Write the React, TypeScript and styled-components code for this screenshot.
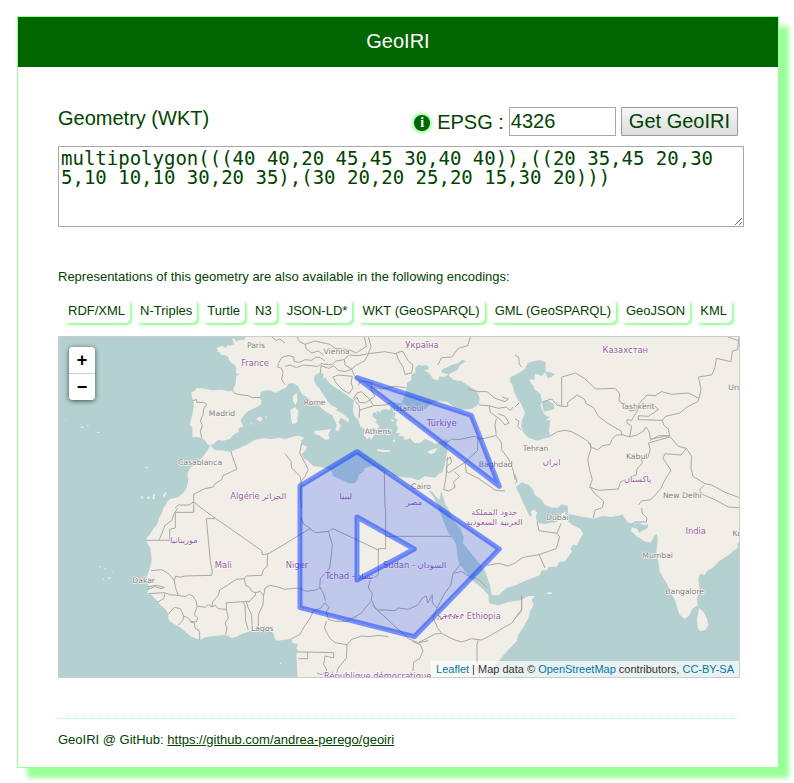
import React from 'react';
import styled, { createGlobalStyle } from 'styled-components';

const GlobalStyle = createGlobalStyle`
  body {
    display: flow-root;
    margin: 0;
    background: #fff;
    color: #040;
    font-family: "Liberation Sans", Arial, sans-serif;
    font-size: 13px;
    line-height: 16px;
  }
`;

const Card = styled.div`
  margin: 16px 15px 15px 17px;
  border: 1px solid #9f9;
  background: #fff;
  box-shadow: 10px 10px 5px #9f9;
`;

const Header = styled.header`
  padding-bottom: 2px;
  background: #060;
  color: #fff;
  text-align: center;
`;

const Title = styled.h1`
  margin: 0;
  font-size: 20px;
  font-weight: normal;
  line-height: 48px;
`;

const Content = styled.main`
  padding: 40px 40px 0;
`;

const Toolbar = styled.div`
  display: flex;
  justify-content: space-between;
  align-items: flex-start;
  font-size: 20px;
  line-height: 22px;
`;

const Controls = styled.div`
  display: flex;
  align-items: center;
  gap: 5px;
`;

const InfoLink = styled.a`
  width: 16px;
  height: 16px;
  margin: 3px 2px 0 0;
  border-radius: 50%;
  background: #060;
  box-shadow: 0 0 3px 2px #9f9;
  color: #fff;
  font: bold 14px/16px "Liberation Serif", serif;
  text-align: center;
  text-decoration: none;
`;

const CodeInput = styled.input`
  box-sizing: border-box;
  width: 107px;
  height: 29px;
  padding: 1px;
  border: 1px solid #a9a9a9;
  color: #040;
  font: 20px "Liberation Sans", Arial, sans-serif;
`;

const SubmitButton = styled.button`
  box-sizing: border-box;
  height: 29px;
  padding: 0 7px;
  border: 1px solid #999;
  border-radius: 1px;
  background: linear-gradient(#f6f6f6, #ddd);
  color: #040;
  font: 20px "Liberation Sans", Arial, sans-serif;
`;

const GeometryText = styled.textarea`
  display: block;
  width: 100%;
  height: 75px;
  margin-top: 10px;
  padding: 2px;
  border: 1px solid #a9a9a9;
  color: #040;
  font: 19px/19px "DejaVu Sans Mono", monospace;
`;

const Intro = styled.p`
  margin: 42px 0 14px;
`;

const Formats = styled.ul`
  display: flex;
  flex-wrap: wrap;
  gap: 5px;
  margin: 0 0 13px;
  padding: 0 0 0 5px;
  list-style: none;
`;

const FormatLink = styled.a`
  display: block;
  padding: 4px 5px;
  border-radius: 5px;
  box-shadow: 2px 2px 2px #9f9;
  color: #040;
  text-decoration: none;
`;

const MapFrame = styled.section`
  position: relative;
  width: 100%;
  height: 340px;
  border: 1px solid #ccc;
  overflow: hidden;
`;

const MapDrawing = styled.svg`
  display: block;
  width: 100%;
  height: 100%;
  background: #f1eee8;
`;

const ZoomBox = styled.div`
  position: absolute;
  top: 10px;
  left: 10px;
  width: 26px;
  border-radius: 4px;
  box-shadow: 0 1px 5px rgba(0, 0, 0, 0.65);
  overflow: hidden;
`;

const ZoomButton = styled.button<{ $divided?: boolean }>`
  display: block;
  box-sizing: content-box;
  width: 26px;
  height: 26px;
  padding: 0;
  border: 0;
  border-bottom: ${(p) => (p.$divided ? '1px solid #ccc' : '0')};
  background: #fff;
  color: #000;
  font: bold 18px/26px "Liberation Sans", Arial, sans-serif;
`;

const Attribution = styled.div`
  position: absolute;
  right: 0;
  bottom: 0;
  padding: 0 5px;
  background: rgba(255, 255, 255, 0.7);
  color: #333;
  font-size: 11px;
  line-height: 16px;
`;

const CreditLink = styled.a`
  color: #0078a8;
  text-decoration: none;
`;

const Footer = styled.footer`
  margin: 40px 40px 0;
  padding: 13px 0 19px;
  border-top: 1px dotted #9f9;
`;

const SourceLink = styled.a`
  color: #040;
`;

/* The map is drawn in units of a third of a pixel, in six 690 x 525 tiles. */
const TILE_W = 690;
const TILE_H = 525;

const tile = (col: number, row: number, points: string) =>
  points
    .trim()
    .split(/\s+/)
    .map((p) => {
      const [x, y] = p.split(',').map(Number);
      return `${x + col * TILE_W},${y + row * TILE_H}`;
    })
    .join(' ');

const seas = [
  [
    '0,0',
    tile(0, 0, `575,0 572,14 565,22 553,20 545,26 537,16 532,16 538,34 525,38 519,35 513,44 500,38 484,46 490,52 485,55 497,60 496,65 508,66 520,72 522,82 529,90 538,94 544,105 543,120 552,124 544,128 542,150 534,172 520,175 500,170 470,172 450,167 425,165 420,172 408,180 411,190 413,198 417,215 413,240 404,275 412,283 412,313 425,312 438,314 450,322 457,334 466,338 458,352 445,370 430,385 418,397 405,405 397,425 400,440 395,465 385,480 370,493 345,498 336,506 331,518`),
    tile(0, 1, `325,0 320,18 312,30 306,50 295,62 285,80 276,88 274,100 286,120 288,135 290,155 286,175 276,205 270,213 280,222 279,232 286,237 280,243 277,258 290,260 300,272 308,280 318,293 330,302 340,318 340,332 347,342 375,358 395,375 410,386 435,396 450,388 470,385 498,382 515,382 530,390 548,385 560,378 585,370 610,366 650,370 657,380 660,393 668,398`),
    tile(1, 1, `0,395 12,394 20,390 22,405 40,408 34,420 40,430 34,440 36,470 38,520`),
    '0,1060',
  ],
  [
    tile(0, 0, `466,337 480,330 488,321 505,323 525,318 535,305 550,298 552,285 566,280 556,262 565,250 578,235 598,226 617,215 620,203 614,195 617,178 632,172 646,172 662,180 678,170`),
    tile(1, 0, `2,164 10,152 24,150 38,158 44,170 50,182 68,194 80,205 92,212 100,215 112,228 128,240 142,246 150,264 156,278 150,292 160,294 168,278 160,268 168,254 178,260 190,268 192,258 170,240 152,232 158,226 140,218 128,205 118,190 102,165 92,155 87,140 90,126 106,118 116,124 113,138 120,132 130,148 148,162 170,175 190,190 204,200 206,215 204,230 208,248 220,262 226,280 240,290 236,305 246,318 254,312 260,322 265,306 270,310 264,295 258,285 278,288 283,278 270,268 276,262 262,250 266,236 276,242 274,232 284,238 290,232 298,228 315,232 318,218 325,208 340,210 358,212 345,222 330,222 322,232 332,240 328,255 338,260 332,272 340,285 332,300 345,300 340,308 355,310 360,322 375,315 388,330 405,330 420,318 440,326 450,334 470,324 483,318 490,325 483,340 488,350 484,370 478,400 472,418 462,422 450,434 420,430 400,442 380,435 350,432 330,430 315,418 290,414 270,400 250,402 235,408 238,415 222,425 217,442 208,450 195,452 172,442 145,430 138,412 110,402 85,400 70,385 55,375 50,362 62,352 66,340 52,335 48,322 58,314 42,308 30,310 0,318`),
    tile(0, 0, `672,314 650,318 625,316 600,320 575,335 552,346 540,350 525,357 500,352 480,352 474,345`),
  ],
  [
    tile(1, 0, `362,182 366,150 378,142 380,124 392,118 390,105 400,95 415,98 425,96 432,105 428,110 416,112 432,120 445,138 458,142 465,130 478,132 490,124 468,118 472,108 488,102 500,96 520,90 532,80 542,85 524,98 518,110 500,120 490,126 505,140 530,145 550,158 575,175 584,195 582,212 560,228 535,230 515,228 500,216 485,206 460,205 440,212 420,228 395,230 372,222 350,210 355,195`),
  ],
  [
    tile(1, 0, `690,126 676,132 674,145 682,155 688,178`),
    tile(2, 0, `8,200 18,212 30,240 22,260 18,280 26,300 42,315 68,323 82,318 105,312 102,290 106,262 92,262 104,252 90,246 84,236 76,215 84,205 100,204 116,212 118,228 96,234 86,236 80,205 78,185 58,168 56,160 42,142 48,138 58,142 60,122 80,128 90,118 98,135 110,132 120,124 104,116 92,116 92,88 75,82 60,84 38,90 30,108 10,120`),
  ],
  [
    tile(2, 0, `4,462 20,448 42,456 52,468 60,486 78,498 90,515 110,524 130,524 140,514 158,518`),
    tile(2, 1, `160,18 190,24 235,32 262,24 290,27 322,20 338,42 352,48 372,44 388,52 400,48 398,60 372,74 366,62 350,58 348,68 365,85 392,102 408,103 418,84 426,78 428,100 424,128 430,160 434,190 446,212 458,232 470,260 480,275 486,298 494,320 508,332 522,324 532,302 548,292 546,272 554,245 550,210 556,198 570,200 576,188 592,180 612,160 640,142 655,128 668,120 668,108 674,98 700,92 700,540 -100,540`),
    tile(1, 1, `590,520 620,482 640,460 670,425 695,400`),
    tile(2, 1, `10,380 25,358 40,330 45,310 56,290 50,275 60,264 40,264 20,276 -20,282 -48,292 -70,288`),
    tile(1, 1, `612,285 610,260 590,240 568,222 556,212 548,200 534,182 522,165 516,140 514,110 500,88 488,70 476,42 466,15`),
    tile(1, 0, `455,510 444,490 432,474 440,474 454,492 464,500 468,474 475,492 480,512`),
    tile(1, 1, `492,5 505,38 525,60 536,88 534,105 552,128 570,150 590,175 603,195 608,212 616,235 620,260 640,262 665,240`),
    tile(2, 1, `2,232 28,220 52,210 74,202 80,188 96,185 102,176 126,176 132,162 150,160 164,140 172,130 166,122 174,110 185,112 204,78 196,62 172,50 158,40 152,26 150,10 140,18 126,42 110,44 90,48 68,44 62,28 66,14 58,4 48,10 50,28 42,22 34,4`),
    tile(2, 0, `25,512 16,488 6,472`),
  ],
];

const islands = [
  tile(0, 0, '603,258 615,250 624,258 615,266'),
  tile(0, 0, '585,272 591,270 588,276'),
  tile(0, 0, '628,250 636,252 634,256'),
  tile(1, 0, '24,190 35,180 38,200 32,216 24,205'),
  tile(1, 0, '16,232 30,222 40,235 36,270 22,274 18,255'),
  tile(1, 0, '88,294 112,292 138,288 130,305 134,318 122,320 104,308 88,302'),
  tile(1, 0, '275,348 292,350 316,352 314,357 290,357 278,354'),
  tile(1, 0, '426,356 440,350 458,344 450,358 438,364'),
  tile(1, 0, '250,270 272,280 280,292 272,288'),
  tile(1, 0, '300,290 310,285 306,292'),
  tile(1, 0, '318,258 328,262 322,268'),
  tile(1, 0, '322,325 330,318 328,328'),
  tile(2, 1, '552,300 566,312 576,332 580,350 572,365 556,370 548,360 546,335'),
  tile(2, 1, '94,254 108,252 112,257 98,259'),
  tile(0, 0, '258,490 262,488 264,498 258,496'),
  tile(0, 0, '276,492 284,490 284,498 278,498'),
  tile(0, 0, '296,482 300,484 297,500 292,496'),
  tile(0, 0, '324,488 332,476 334,480 328,496'),
  tile(0, 0, '268,402 280,403 276,407'),
  tile(0, 0, '72,281 88,281 84,285'),
  tile(0, 0, '94,276 102,278 98,281'),
  tile(0, 0, '122,296 134,297 132,301'),
  tile(0, 0, '30,261 34,262 32,265'),
  tile(0, 1, '132,173 138,175 135,180'),
  tile(0, 1, '146,180 155,183 150,184'),
  tile(0, 1, '172,190 176,190 174,194'),
  tile(0, 1, '158,207 168,209 162,214'),
  tile(0, 1, '142,214 148,211 146,216'),
  tile(0, 1, '674,464 680,464 677,470'),
];

const borders = [
  // Iberia and France
  tile(0, 0, '532,172 540,182 562,186 580,188 592,194 617,194'),
  tile(0, 0, '412,204 424,199 426,208 446,208 455,214 446,228 444,246 436,262 442,278 436,295 440,314'),
  tile(0, 0, '650,12 664,22 674,18 690,30'),
  tile(0, 0, '690,70 680,74 670,92 668,102 680,106 684,118 680,140 690,155'),
  // North Africa
  tile(0, 0, '528,355 532,370 540,392 546,408 530,416 504,428 500,440 480,452 474,462 446,468 416,484 416,538'),
  tile(0, 0, '416,506 438,525'),
  tile(0, 0, '360,525 370,516 402,516 416,506'),
  tile(0, 1, '416,0 416,13 361,13 361,60 344,64 344,97 274,97'),
  tile(0, 1, '368,0 356,20 350,38 330,52 320,78 312,96'),
  tile(0, 1, '438,0 620,128 622,140 638,138 690,108'),
  tile(0, 1, '480,32 454,32 466,160 472,190 470,202 390,204 376,208 362,204 358,218 352,210 340,196 320,185 288,188'),
  tile(0, 1, '358,218 362,240 370,262 344,260 330,254 280,257'),
  tile(0, 1, '278,236 304,232 328,238 318,242 300,236 278,244'),
  tile(0, 1, '330,256 326,272 308,282'),
  tile(0, 1, '368,262 392,266 400,260 412,262 424,280 426,296 418,320 428,330 424,342 406,340 400,330 386,324 376,302 358,298 340,318'),
  tile(0, 1, '386,324 384,336 370,352'),
  tile(0, 1, '406,342 418,345 420,360 434,370 434,396'),
  tile(0, 1, '426,294 450,298 460,290 470,296 482,292 490,302 514,304 514,284 584,280'),
  tile(0, 1, '514,304 520,330 510,345 516,360 512,380'),
  tile(0, 1, '562,282 570,290 572,340 580,366'),
  tile(0, 1, '574,282 580,300 590,320 592,368'),
  tile(0, 1, '470,296 474,280 490,262 494,246 520,230 544,214 568,212 574,204 620,202 626,184 636,176 638,138'),
  tile(0, 1, '568,212 572,232 584,238 590,250 602,254 600,264 580,282'),
  tile(0, 1, '602,254 616,250 626,264 624,290 610,320 610,368'),
  tile(0, 1, '626,264 630,240 644,232 665,236 690,244'),
  tile(1, 1, '0,244 40,240 64,250 92,246 108,238'),
  tile(1, 1, '0,108 74,62 92,74 130,70 144,62 280,126'),
  tile(1, 1, '48,30 56,48 78,62'),
  tile(1, 1, '130,70 142,110 138,150 134,180 106,212 104,236 116,258 122,280'),
  tile(1, 0, '0,362 18,385 20,405 45,430 50,450 46,480 50,525'),
  tile(1, 0, '50,330 44,360 60,390 70,410 60,430 44,450'),
  tile(1, 0, '298,416 300,525'),
  tile(1, 1, '302,0 302,122 280,122 280,200'),
  tile(1, 1, '302,85 500,85'),
  tile(1, 1, '280,200 256,216 250,240 262,256 258,280 244,296 228,316 204,330 186,340 150,340 130,334 124,312 132,298 120,284 108,300 84,310 76,330 60,352 44,380 20,392'),
  tile(1, 1, '124,340 118,360 134,390 150,404 186,410 200,394 230,384 252,386 280,382 310,386'),
  tile(1, 1, '262,280 270,300 290,318 310,336 330,356 350,372 370,392 400,404 430,398'),
  tile(1, 1, '262,290 278,306 300,306 330,308 340,300 370,304 400,290 412,270 424,264 428,285 442,260 442,284 456,300'),
  tile(1, 1, '530,165 504,196 498,230 478,258 458,296 444,328 458,360 470,376 504,394 530,402 560,392 590,396 620,380 680,345 710,304 710,260'),
  tile(1, 1, '508,196 530,190 550,204 580,214 606,240'),
  tile(1, 1, '580,395 576,410 576,480 586,510'),
  tile(1, 1, '382,400 406,410 414,428 404,452 386,462 384,490'),
  tile(1, 1, '400,404 424,392 450,378 468,376'),
  tile(1, 1, '38,432 68,432 68,452 40,452'),
  tile(1, 1, '68,432 146,434 146,450 120,444 116,470 126,486 112,500 96,496'),
  tile(1, 1, '186,410 184,450 160,480 150,510'),
  // Europe
  tile(1, 0, '0,70 12,68 26,72 28,86 44,88 60,80 80,82 92,72 106,74 120,84'),
  tile(1, 0, '0,100 16,96 34,104 56,96 76,98 100,100 108,92 140,96 152,84 178,80'),
  tile(1, 0, '36,12 44,26 60,34 64,48 80,60 100,54 116,66'),
  tile(1, 0, '60,34 90,24 108,28 134,34 150,46 192,50 214,60 244,40 238,12'),
  tile(1, 0, '178,80 190,66 220,68 250,62 258,40 250,12'),
  tile(1, 0, '250,62 300,56 330,62 352,54 370,84 384,96 380,120 360,124 354,102 340,80 334,60'),
  tile(1, 0, '178,80 180,96 200,108 214,96 238,84 250,64'),
  tile(1, 0, '106,120 108,98 132,106 146,98 160,112 180,116 200,108 208,128 226,144 220,158'),
  tile(1, 0, '144,132 160,126 202,130 198,150 204,164 192,182 170,168 152,148 144,132'),
  tile(1, 0, '226,144 262,150 258,168 270,190 254,200 266,218 300,216 320,208'),
  tile(1, 0, '258,160 290,168 330,160 362,164'),
  tile(1, 0, '206,196 216,180 230,176 244,190 256,200 240,210 222,208 216,192 204,206'),
  tile(1, 0, '212,205 222,218 224,232 234,228 266,218'),
  tile(1, 0, '224,232 222,256'),
  tile(1, 0, '458,96 470,74 500,72 520,46 548,38 556,12'),
  // Middle East and the Caucasus
  tile(1, 0, '550,168 580,176 606,176 630,196 660,206 670,198 652,192'),
  tile(1, 0, '582,216 612,218 640,226 664,222 676,232 684,222'),
  tile(1, 0, '612,218 616,238 636,252 648,262 660,276 672,270 660,250 640,242'),
  tile(1, 0, '634,256 630,276 634,308 650,330 650,350 672,380 684,410 690,440'),
  tile(1, 0, '484,330 500,318 520,320 568,310 590,318 632,308'),
  tile(1, 0, '578,312 578,352 540,388 490,420 484,412 488,372'),
  tile(1, 0, '482,382 496,372 500,388 486,400 482,440 476,470 492,474 510,462 506,446 524,430 508,416'),
  tile(1, 0, '540,388 544,418 580,436 632,472 660,474'),
  tile(2, 0, '0,424 6,444 0,452'),
  tile(2, 0, '0,258 12,264 8,280 18,290'),
  tile(2, 0, '0,222 12,210'),
  tile(2, 0, '0,66 12,74 12,92 20,102'),
  tile(2, 1, '66,40 72,68 126,76 138,46'),
  tile(2, 1, '126,76 134,86 124,122 72,140 24,148 0,165'),
  tile(2, 1, '72,140 90,180'),
  tile(1, 1, '608,172 640,166 670,174 690,165'),
  tile(2, 1, '20,272 20,308 0,332'),
  // Central and South Asia
  tile(2, 0, '84,206 110,198 126,216 140,220 158,220 158,208 186,186 208,198 214,212 236,224 250,250 280,272 318,294 320,306 304,306 290,320 286,334 264,338 248,350 230,344 220,326 200,312 170,296 150,292 128,296 104,310'),
  tile(2, 0, '140,220 140,132 182,120 208,136 242,168 300,166 314,182 312,204 326,212 344,234 366,230 374,210 396,186 420,188 440,176 470,184 520,180 552,196 548,206 516,222 494,240 452,250 442,262 370,260 370,248 400,250 430,230 412,212 392,220 384,210 360,244 350,262 336,260 336,270 350,280 344,312'),
  tile(2, 0, '318,304 344,312 366,306 386,294 392,282 402,294 406,318 430,314 464,308 460,288 446,276 442,262'),
  tile(2, 0, '552,196 558,168 550,132 590,126 600,104 604,76 648,86 652,54 668,50 672,12'),
  tile(2, 0, '640,12 672,24'),
  tile(2, 0, '226,330 228,346 218,380 224,412 232,440 224,462 238,480 266,505 262,525'),
  tile(2, 0, '224,462 250,472 310,468 316,448 340,434 364,426 366,408 382,390 378,376 398,374 406,350 400,330 436,320 466,312 490,340 514,346 498,366 450,362 444,376 468,412 450,440 438,466 408,500 380,504 370,516'),
  tile(2, 0, '406,322 430,308 464,308'),
  tile(2, 0, '514,346 530,370 528,406 534,430 570,452 590,456 630,478 690,500'),
  tile(2, 0, '568,456 554,470 562,484 600,500 640,522 690,525'),
  tile(2, 1, '235,30 240,6 260,0'),
  tile(2, 1, '380,0 382,16 396,30 394,42 358,42 348,52'),
];

type Label = { x: number; y: number; text: string; country?: boolean };

const labels: Label[] = [
  { x: 603, y: 46, text: 'Paris' },
  { x: 600, y: 100, text: 'France', country: true },
  { x: 501, y: 250, text: 'Madrid' },
  { x: 435, y: 396, text: 'Casablanca' },
  { x: 610, y: 498, text: 'Algérie الجزائر', country: true },
  { x: 845, y: 64, text: 'Vienna' },
  { x: 1101, y: 46, text: 'Україна', country: true },
  { x: 779, y: 216, text: 'Rome' },
  { x: 1060, y: 234, text: 'Istanbul' },
  { x: 1160, y: 279, text: 'Türkiye', country: true },
  { x: 969, y: 304, text: 'Athens' },
  { x: 1322, y: 401, text: 'Baghdad' },
  { x: 1098, y: 467, text: 'Cairo' },
  { x: 872, y: 497, text: 'ليبيا', country: true },
  { x: 1077, y: 515, text: 'مصر', country: true },
  { x: 1711, y: 59, text: 'Казахстан', country: true },
  { x: 1748, y: 229, text: 'Tashkent' },
  { x: 2062, y: 172, text: 'Urumqi' },
  { x: 1442, y: 353, text: 'Tehran' },
  { x: 1490, y: 397, text: 'ایران', country: true },
  { x: 1745, y: 377, text: 'Kabul' },
  { x: 1748, y: 448, text: 'پاکستان', country: true },
  { x: 1882, y: 495, text: 'New Delhi' },
  { x: 387, y: 629, text: 'موريتانيا', country: true },
  { x: 505, y: 704, text: 'Mali', country: true },
  { x: 266, y: 750, text: 'Dakar' },
  { x: 622, y: 895, text: 'Lagos' },
  { x: 726, y: 704, text: 'Niger', country: true },
  { x: 883, y: 738, text: 'Tchad - تشاد', country: true },
  { x: 1079, y: 705, text: 'Sudan - السودان', country: true },
  { x: 1242, y: 858, text: 'ኢትዮጵያ Ethiopia', country: true },
  { x: 968, y: 1038, text: 'République démocratique', country: true },
  { x: 1318, y: 545, text: 'حدود المملكة', country: true },
  { x: 1318, y: 575, text: 'العربية السعودية', country: true },
  { x: 1507, y: 560, text: 'Dubai' },
  { x: 1922, y: 604, text: 'India', country: true },
  { x: 2075, y: 610, text: 'Kolkata' },
  { x: 1808, y: 675, text: 'Mumbai' },
  { x: 1889, y: 782, text: 'Bangalore' },
];

const MapLabel = styled.text<{ $country?: boolean }>`
  fill: ${(p) => (p.$country ? '#9a5fa0' : '#808080')};
  stroke: #f7f5f2;
  stroke-width: ${(p) => (p.$country ? '6px' : '4px')};
  stroke-linejoin: round;
  paint-order: stroke;
  font-family: "DejaVu Sans", "Noto Sans", sans-serif;
  font-size: ${(p) => (p.$country ? '25px' : '23px')};
  text-anchor: middle;
`;

function WorldMap() {
  return (
    <MapDrawing viewBox="12 12 2040 1020" preserveAspectRatio="xMidYMid slice" role="img" aria-label="Map">
      {seas.map((parts, i) => (
        <polygon key={i} points={parts.join(' ')} fill="#b5d0d0" />
      ))}
      {islands.map((points, i) => (
        <polygon key={i} points={points} fill="#f1eee8" />
      ))}
      <g fill="none" stroke="#a9a8a6" strokeWidth="3" strokeLinejoin="round">
        {borders.map((points, i) => (
          <polyline key={i} points={points} />
        ))}
      </g>
      {labels.map((l) => (
        <MapLabel key={l.text} x={l.x} y={l.y} $country={l.country}>
          {l.text}
        </MapLabel>
      ))}
      <path
        d="M906 134 L1249 247 L1333 460 Z M906 356 L1333 648 L1078 911 L735 824 L735 459 Z M906 552 L1078 648 L906 741 Z"
        fill="#03f"
        fillOpacity="0.2"
        fillRule="evenodd"
        stroke="#03f"
        strokeOpacity="0.5"
        strokeWidth="15"
        strokeLinejoin="round"
      />
    </MapDrawing>
  );
}

const formats = [
  'RDF/XML',
  'N-Triples',
  'Turtle',
  'N3',
  'JSON-LD*',
  'WKT (GeoSPARQL)',
  'GML (GeoSPARQL)',
  'GeoJSON',
  'KML',
];

const geometry =
  'multipolygon(((40 40,20 45,45 30,40 40)),((20 35,45 20,30 5,10 10,10 30,20 35),(30 20,20 25,20 15,30 20)))';

export default function App() {
  return (
    <>
      <GlobalStyle />
      <Card>
        <Header>
          <Title>GeoIRI</Title>
        </Header>
        <Content>
          <form onSubmit={(e) => e.preventDefault()}>
            <Toolbar>
              <label htmlFor="wkt">Geometry (WKT)</label>
              <Controls>
                <InfoLink href="#epsg" aria-label="About EPSG codes">i</InfoLink>
                <label htmlFor="epsg">EPSG :</label>
                <CodeInput id="epsg" defaultValue="4326" />
                <SubmitButton type="submit">Get GeoIRI</SubmitButton>
              </Controls>
            </Toolbar>
            <GeometryText id="wkt" spellCheck={false} defaultValue={geometry} />
          </form>
          <Intro>Representations of this geometry are also available in the following encodings:</Intro>
          <Formats>
            {formats.map((name) => (
              <li key={name}>
                <FormatLink href="#format">{name}</FormatLink>
              </li>
            ))}
          </Formats>
          <MapFrame>
            <WorldMap />
            <ZoomBox>
              <ZoomButton type="button" title="Zoom in" $divided>+</ZoomButton>
              <ZoomButton type="button" title="Zoom out">−</ZoomButton>
            </ZoomBox>
            <Attribution>
              <CreditLink href="#leaflet">Leaflet</CreditLink> | Map data ©{' '}
              <CreditLink href="#osm">OpenStreetMap</CreditLink> contributors,{' '}
              <CreditLink href="#license">CC-BY-SA</CreditLink>
            </Attribution>
          </MapFrame>
        </Content>
        <Footer>
          GeoIRI @ GitHub:{' '}
          <SourceLink href="https://github.com/andrea-perego/geoiri">
            https://github.com/andrea-perego/geoiri
          </SourceLink>
        </Footer>
      </Card>
    </>
  );
}
